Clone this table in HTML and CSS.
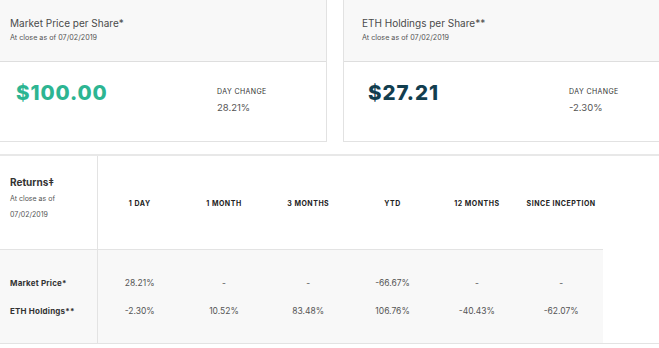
FILE: index.html
```html
<!DOCTYPE html>
<html>
<head>
<meta charset="utf-8">
<link rel="stylesheet" href="styles.css">
</head>
<body>
<div class="cards">
  <div class="card">
    <div class="card-head">
      <div class="card-title">Market Price per Share*</div>
      <div class="card-sub">At close as of 07/02/2019</div>
    </div>
    <div class="card-body">
      <div class="price price-teal">$100.00</div>
      <div class="change">
        <div class="change-label">DAY CHANGE</div>
        <div class="change-value">28.21%</div>
      </div>
    </div>
  </div>
  <div class="card">
    <div class="card-head">
      <div class="card-title">ETH Holdings per Share**</div>
      <div class="card-sub">At close as of 07/02/2019</div>
    </div>
    <div class="card-body">
      <div class="price price-navy">$27.21</div>
      <div class="change">
        <div class="change-label">DAY CHANGE</div>
        <div class="change-value">-2.30%</div>
      </div>
    </div>
  </div>
</div>

<div class="returns">
  <table class="rt">
    <thead>
      <tr>
        <th class="rt-first">
          <div class="rt-title">Returns‡</div>
          <div class="rt-sub">At close as of<br>07/02/2019</div>
        </th>
        <th>1 DAY</th>
        <th>1 MONTH</th>
        <th>3 MONTHS</th>
        <th>YTD</th>
        <th>12 MONTHS</th>
        <th>SINCE INCEPTION</th>
      </tr>
    </thead>
    <tbody>
      <tr class="row-a">
        <td class="rt-first rt-name">Market Price*</td>
        <td>28.21%</td><td>-</td><td>-</td><td>-66.67%</td><td>-</td><td>-</td>
      </tr>
      <tr class="row-b">
        <td class="rt-first rt-name">ETH Holdings**</td>
        <td>-2.30%</td><td>10.52%</td><td>83.48%</td><td>106.76%</td><td>-40.43%</td><td>-62.07%</td>
      </tr>
    </tbody>
  </table>
</div>
</body>
</html>
```

FILE: styles.css
```css
html, body {
  margin: 0;
  padding: 0;
  background: #fff;
  overflow: hidden;
}
body {
  width: 659px;
  height: 348px;
  font-family: Inter, Lato, sans-serif;
  color: #444;
}
.cards {
  display: flex;
  gap: 16px;
  margin-left: -9px;
  width: 700px;
}
.card {
  width: 334px;
  flex: none;
  border: 1px solid #e2e2e2;
  border-top: none;
}
.card-head {
  background: #f8f8f8;
  height: 62px;
  box-sizing: border-box;
  padding: 16px 0 0 18px;
  border-bottom: 1px solid #dedede;
}
.card-title {
  font-size: 10px;
  color: #4a4a4a;
  line-height: 14px;
}
.card-sub {
  font-size: 7.2px;
  color: #555;
  margin-top: 3px;
  line-height: 9px;
}
.card-body {
  height: 79px;
  display: flex;
  align-items: flex-start;
  padding: 18px 0 0 24px;
  box-sizing: border-box;
}
.price {
  font-size: 20.5px;
  font-weight: 800;
  line-height: 26px;
  width: 201px;
  letter-spacing: 0.9px;
}
.price-teal { color: #2db592; }
.price-navy { color: #123e4f; }
.change { padding-top: 7px; }
.change-label {
  font-size: 7px;
  letter-spacing: 0.4px;
  color: #333;
  line-height: 10px;
}
.change-value {
  font-size: 9.5px;
  color: #555;
  margin-top: 5px;
  line-height: 12px;
}

.returns {
  margin-top: 12px;
  border-top: 2px solid #e8e8e8;
  border-bottom: 1px solid #e3e3e3;
}
.rt {
  width: 603px;
  border-collapse: collapse;
  table-layout: fixed;
}
.rt th, .rt td {
  text-align: center;
  padding: 0;
  width: 84.3px;
}
.rt .rt-first {
  width: 97px;
  text-align: left;
  padding-left: 10px;
  border-right: 1px solid #e3e3e3;
  box-sizing: border-box;
}
.rt thead tr {
  height: 93px;
  border-bottom: 1px solid #e3e3e3;
}
.rt th {
  font-size: 7px;
  letter-spacing: 0.5px;
  font-weight: 700;
  color: #222;
  padding-top: 3px;
}
.rt-title {
  font-size: 10px;
  letter-spacing: 0;
  font-weight: 700;
  color: #333;
  line-height: 14px;
}
.rt-sub {
  font-size: 7px;
  letter-spacing: 0;
  font-weight: 400;
  color: #555;
  line-height: 16px;
  margin-top: 2px;
  padding-bottom: 9px;
}
.rt tbody tr {
  background: #f8f8f8;
}
.rt td {
  font-size: 8.5px;
  color: #555;
}
.rt .row-a { height: 47px; }
.rt .row-a td { padding-top: 20px; }
.rt .row-b { height: 47px; }
.rt .row-b td { padding-bottom: 17px; }
.rt .rt-name {
  font-weight: 700;
  color: #333;
  font-size: 8px;
  letter-spacing: 0.2px;
}
```
